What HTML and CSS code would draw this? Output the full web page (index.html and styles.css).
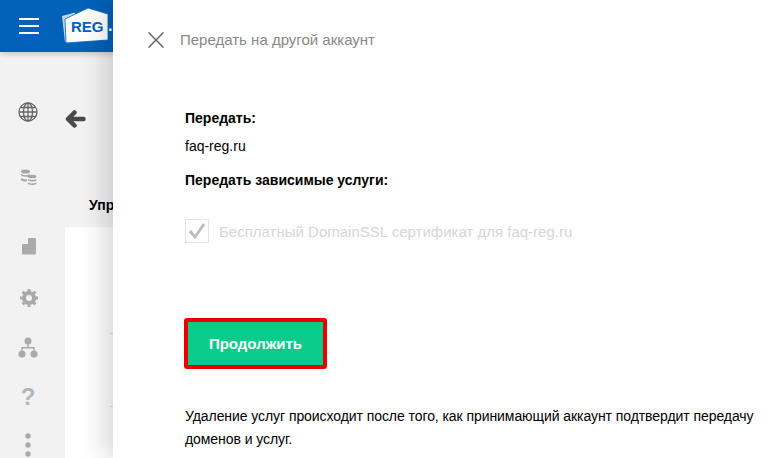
FILE: index.html
```html
<!DOCTYPE html>
<html lang="ru">
<head>
  <meta charset="UTF-8">
  <meta name="viewport" content="width=device-width, initial-scale=1.0">
  <title>Передать на другой аккаунт</title>
  <link rel="stylesheet" href="styles.css">
</head>
<body>
  <header class="topbar">
    <button class="burger" aria-label="Меню"><span></span><span></span><span></span></button>
    <div class="logo">
      <svg width="50" height="38" viewBox="0 0 50 38">
        <path d="M0 9 L13 5.500 L13 33 L3 35 Z" fill="#fff" opacity="0.75"/>
        <path d="M3 12 L26 1 L46 7 L46 33 L4 36 Z" fill="#fff" stroke="#0261b8" stroke-width="0.800"/>
      </svg>
      <span class="logo-text">REG</span>
      <span class="logo-dot">.</span>
    </div>
  </header>

  <div class="below">
    <nav class="side">
      <svg class="side-icon globe" width="20" height="20" viewBox="0 0 20 20" fill="none" stroke="#666" stroke-width="1.300">
        <circle cx="10" cy="10" r="9"/>
        <ellipse cx="10" cy="10" rx="4.500" ry="9"/>
        <path d="M10 1 V19 M1 10 H19 M2.500 5.500 H17.500 M2.500 14.500 H17.500"/>
      </svg>
      <svg class="side-icon coins" width="17" height="17" viewBox="0 0 17 17" fill="#a5a5a5">
        <ellipse cx="5.500" cy="2.500" rx="4.500" ry="2"/>
        <path d="M1 5 q4.500 2.500 9 0 v1.500 q-4.500 2.500 -9 0 Z M1 9 q4.500 2.500 6 1 v2 q-3 1.500 -6 -1 Z"/>
        <ellipse cx="12" cy="7.500" rx="4.500" ry="1.800"/>
        <path d="M8 10 q4 2 8.500 0 v1.500 q-4.500 2 -8.500 0 Z M8 13.500 q4 2 8.500 0 v1.500 q-4.500 2 -8.500 0 Z"/>
      </svg>
      <svg class="side-icon page" width="15" height="17" viewBox="0 0 15 17" fill="#aaa">
        <path d="M1 6 H6 V1 Q6 0 7 0 H13 Q14 0 14 1 V15.500 Q14 16.500 13 16.500 H1 Q0 16.500 0 15.500 V7 Q0 6 1 6 Z"/>
      </svg>
      <svg class="side-icon gear" width="18" height="18" viewBox="0 0 18 18" fill="none" stroke="#aaa">
        <circle cx="9" cy="9" r="5" stroke-width="4"/>
        <path d="M9 0 V3 M9 15 V18 M0 9 H3 M15 9 H18 M2.600 2.600 L4.700 4.700 M13.300 13.300 L15.400 15.400 M2.600 15.400 L4.700 13.300 M13.300 4.700 L15.400 2.600" stroke-width="3"/>
      </svg>
      <svg class="side-icon tree" width="20" height="21" viewBox="0 0 20 21" fill="#aaa">
        <circle cx="10" cy="4" r="3.500"/>
        <circle cx="4" cy="17" r="3.500"/>
        <circle cx="16" cy="17" r="3.500"/>
        <path d="M9.300 7 H10.700 V10 H16.700 V14 H15.300 V11.400 H4.700 V14 H3.300 V10 H9.300 Z"/>
      </svg>
      <span class="side-icon help">?</span>
      <svg class="side-icon dots" width="6" height="24" viewBox="0 0 6 24" fill="#aaa">
        <circle cx="3" cy="3" r="2.700"/>
        <circle cx="3" cy="12" r="2.700"/>
        <circle cx="3" cy="21" r="2.700"/>
      </svg>
    </nav>

    <main class="content">
      <svg class="back" width="21" height="18" viewBox="0 0 21 18" fill="none" stroke="#4a4a4a" stroke-width="4.500" stroke-linecap="round" stroke-linejoin="round">
        <path d="M9.500 2.500 L3 9 L9.500 15.500 M3 9 H18.500"/>
      </svg>
      <h2 class="content-title">Управление услугой</h2>
      <div class="card">
        <div class="card-row"></div>
        <div class="card-row"></div>
      </div>
    </main>
  </div>

  <aside class="panel">
    <div class="panel-head">
      <svg width="16" height="16" viewBox="0 0 16 16" stroke="#666" stroke-width="1.500">
        <path d="M0.500 0.500 L15.500 15.500 M15.500 0.500 L0.500 15.500"/>
      </svg>
      <span class="panel-title">Передать на другой аккаунт</span>
    </div>

    <div class="panel-body">
      <div class="label first">Передать:</div>
      <div class="value">faq-reg.ru</div>
      <div class="label deps">Передать зависимые услуги:</div>

      <label class="check">
        <span class="check-box">
          <svg width="18" height="16" viewBox="0 0 18 16" fill="none" stroke="#bdbdbd" stroke-width="3">
            <path d="M2 8 L7 14 L16 1"/>
          </svg>
        </span>
        <span class="check-text">Бесплатный DomainSSL сертификат для faq-reg.ru</span>
      </label>

      <button class="continue">Продолжить</button>

      <p class="note">Удаление услуг происходит после того, как принимающий аккаунт подтвердит передачу доменов и услуг.</p>
    </div>
  </aside>
</body>
</html>
```

FILE: styles.css
```css
html, body {
  height: 100%;
}

body {
  margin: 0;
  height: 458px;
  overflow: hidden;
  position: relative;
  background: #f2f2f2;
  font-family: 'Liberation Sans', Arial, sans-serif;
  font-size: 14px;
  color: #000;
}

.topbar {
  height: 52px;
  background: #0261b8;
  display: flex;
  align-items: center;
  box-shadow: 0 2px 6px rgba(0, 0, 0, 0.2);
  position: relative;
}

.burger {
  width: 20px;
  margin-left: 19px;
  padding: 0;
  border: none;
  background: none;
  display: flex;
  flex-direction: column;
  gap: 5px;
}

.burger span {
  height: 2px;
  background: #fff;
}

.logo {
  position: relative;
  width: 52px;
  height: 38px;
  margin-left: 23px;
}

.logo svg {
  display: block;
}

.logo-text {
  position: absolute;
  left: 9px;
  top: 11px;
  color: #0261b8;
  font-weight: bold;
  font-size: 15px;
}

.logo-dot {
  position: absolute;
  left: 46px;
  top: 10px;
  color: #fff;
  font-weight: bold;
  font-size: 16px;
}

.below {
  display: flex;
}

.side {
  width: 56px;
  display: flex;
  flex-direction: column;
  align-items: center;
  padding-top: 50px;
}

.side-icon {
  display: block;
  flex: none;
}

.coins { margin-top: 47px; }
.page { margin-top: 52px; margin-left: 3px; }
.gear { margin-top: 34px; margin-left: 1px; }
.tree { margin-top: 30px; }

.help {
  margin-top: 24px;
  color: #b5b5b5;
  font-size: 24px;
  font-weight: bold;
  line-height: 30px;
}

.dots { margin-top: 21px; }

.content {
  flex: 1;
  padding-top: 58px;
  padding-left: 9px;
}

.back {
  display: block;
}

.content-title {
  margin: 67px 0 0 24px;
  font-size: 14px;
  line-height: 20px;
  white-space: nowrap;
}

.card {
  margin-top: 12px;
  height: 240px;
  background: #fff;
  padding-top: 106px;
  box-sizing: border-box;
}

.card-row {
  height: 72px;
  margin-left: 45px;
  border-top: 1px solid #ddd;
}

/* side panel over the page */
.panel {
  position: absolute;
  top: 0;
  right: 0;
  bottom: 0;
  left: 113px;
  background: #fff;
  box-shadow: -8px 0 24px rgba(0, 0, 0, 0.16);
}

.panel-head {
  display: flex;
  align-items: center;
  height: 80px;
  padding-left: 35px;
}

.panel-title {
  margin-left: 16px;
  margin-bottom: 2px;
  color: #888;
  font-size: 15px;
}

.panel-body {
  padding-left: 72px;
  padding-right: 20px;
}

.label {
  font-weight: bold;
  line-height: 16px;
}

.first { margin-top: 30px; }

.value {
  margin-top: 12px;
  line-height: 16px;
}

.deps { margin-top: 18px; }

.check {
  display: flex;
  align-items: flex-start;
  margin-top: 31px;
  color: #d6d6d6;
  font-size: 15px;
  line-height: 24px;
}

.check-box {
  width: 22px;
  height: 22px;
  border: 1px solid #e3e3e3;
  margin-right: 10px;
  display: flex;
  align-items: center;
  justify-content: center;
}

.check-text {
  padding-top: 1px;
}

.continue {
  display: block;
  width: 143px;
  height: 51px;
  margin-top: 74px;
  margin-left: -1px;
  border: 4px solid #e90000;
  border-radius: 3px;
  background: #09cb8a;
  color: #fff;
  font-family: inherit;
  font-size: 15px;
  font-weight: bold;
}

.note {
  margin: 36px 0 0;
  line-height: 23px;
  width: 590px;
  letter-spacing: -0.07px;
}
```
